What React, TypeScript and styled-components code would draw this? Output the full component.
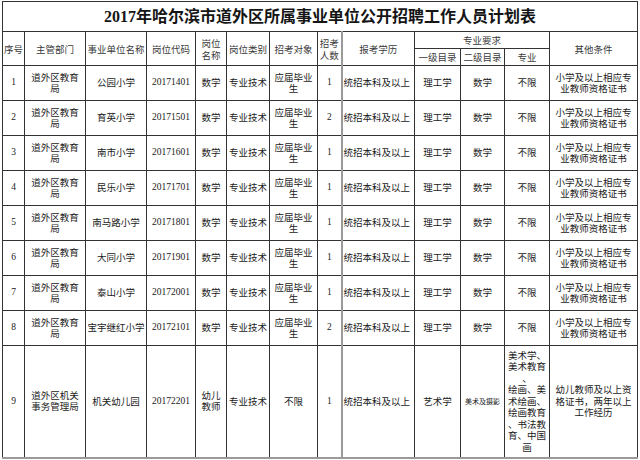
import React from 'react';
import styled, { createGlobalStyle } from 'styled-components';

const GlobalStyle = createGlobalStyle`
  html, body {
    margin: 0;
    padding: 0;
    background: #ffffff;
  }
  body {
    font-family: "Noto Sans CJK SC", "Liberation Sans", sans-serif;
    color: #111;
  }
`;

const COLS = [22, 61, 61, 49, 31, 43, 48, 24, 73, 46, 44, 45, 88];

const schools = [
    ['公园小学', '20171401', '1'],
    ['育英小学', '20171501', '2'],
    ['南市小学', '20171601', '1'],
    ['民乐小学', '20171701', '1'],
    ['南马路小学', '20171801', '1'],
    ['大同小学', '20171901', '1'],
    ['泰山小学', '20172001', '1'],
    ['宝宇继红小学', '20172101', '2'],
];

const majors = ['美术学、', '美术教育', '、', '绘画、美', '术绘画、', '绘画教育', '、书法教', '育、中国', '画'];

// text that wraps in the sheet, kept as its printed lines
const Lines = ({ items }: { items: string[] }) => (
    <>
        {items.map((t, i) => (
            <React.Fragment key={i}>
                {t}
                {i < items.length - 1 && <br />}
            </React.Fragment>
        ))}
    </>
);

const App = () => (
    <Page>
        <GlobalStyle />
        <Table>
            <colgroup>
                {COLS.map((w, i) => (
                    <col key={i} style={{ width: w }} />
                ))}
            </colgroup>
            <thead>
                <tr>
                    <Title colSpan={13}>2017年哈尔滨市道外区所属事业单位公开招聘工作人员计划表</Title>
                </tr>
                <tr>
                    <Head rowSpan={2}>序号</Head>
                    <Head rowSpan={2}>主管部门</Head>
                    <Head rowSpan={2}>事业单位名称</Head>
                    <Head rowSpan={2}>岗位代码</Head>
                    <Head rowSpan={2}>
                        <Lines items={['岗位', '名称']} />
                    </Head>
                    <Head rowSpan={2}>岗位类别</Head>
                    <Head rowSpan={2}>招考对象</Head>
                    <Head rowSpan={2}>
                        <Lines items={['招考', '人数']} />
                    </Head>
                    <Head rowSpan={2} $edge>
                        报考学历
                    </Head>
                    <Head colSpan={3} $short>
                        专业要求
                    </Head>
                    <Head rowSpan={2}>其他条件</Head>
                </tr>
                <tr>
                    <Head $short>一级目录</Head>
                    <Head $short>二级目录</Head>
                    <Head $short>专业</Head>
                </tr>
            </thead>
            <tbody>
                {schools.map(([name, code, count], i) => (
                    <Row key={code}>
                        <Cell $serif>{i + 1}</Cell>
                        <Cell>
                            <Lines items={['道外区教育', '局']} />
                        </Cell>
                        <Cell>{name}</Cell>
                        <Cell $serif>{code}</Cell>
                        <Cell>数学</Cell>
                        <Cell>专业技术</Cell>
                        <Cell>
                            <Lines items={['应届毕业', '生']} />
                        </Cell>
                        <Cell $serif>{count}</Cell>
                        <Cell $edge $left>
                            统招本科及以上
                        </Cell>
                        <Cell>理工学</Cell>
                        <Cell>数学</Cell>
                        <Cell>不限</Cell>
                        <Cell>
                            <Lines items={['小学及以上相应专', '业教师资格证书']} />
                        </Cell>
                    </Row>
                ))}
                <LastRow>
                    <Cell $serif>9</Cell>
                    <Cell>
                        <Lines items={['道外区机关', '事务管理局']} />
                    </Cell>
                    <Cell>机关幼儿园</Cell>
                    <Cell $serif>20172201</Cell>
                    <Cell>
                        <Lines items={['幼儿', '教师']} />
                    </Cell>
                    <Cell>专业技术</Cell>
                    <Cell>不限</Cell>
                    <Cell $serif>1</Cell>
                    <Cell $edge $left>
                        统招本科及以上
                    </Cell>
                    <Cell>艺术学</Cell>
                    <Cell $tiny>美术及摄影</Cell>
                    <Cell>
                        <Lines items={majors} />
                    </Cell>
                    <Cell>
                        <Lines items={['幼儿教师及以上资', '格证书，两年以上', '工作经历']} />
                    </Cell>
                </LastRow>
            </tbody>
        </Table>
    </Page>
);

const Page = styled.div`
    width: 640px;
    height: 460px;
    padding: 1px 0 0 2px;
    box-sizing: border-box;
    overflow: hidden;
`;

const Table = styled.table`
    width: 635px;
    table-layout: fixed;
    border-collapse: collapse;
    border-bottom: 2px solid #9a9a9a;
`;

const Title = styled.th`
    height: 29px;
    padding: 0;
    border: 1px solid #333;
    font-family: "Liberation Serif", "Noto Sans CJK SC", serif;
    font-size: 16px;
    font-weight: 700;
    color: #151515;
    text-align: center;
    vertical-align: middle;
    line-height: 29px;
`;

const Head = styled.th<{ $edge?: boolean; $short?: boolean }>`
    height: ${({ $short }) => ($short ? '16px' : 'auto')};
    padding: 0;
    border: 1px solid #333;
    border-left: ${({ $edge }) => ($edge ? '2px solid #9a9a9a' : '1px solid #333')};
    font-size: 9.5px;
    font-weight: 400;
    line-height: 12px;
    color: #3a3a3a;
    white-space: nowrap;
    text-align: center;
    vertical-align: middle;
`;

const Row = styled.tr`
    height: 35px;
`;

const LastRow = styled.tr`
    height: 112px;
`;

const Cell = styled.td<{
    $edge?: boolean;
    $left?: boolean;
    $serif?: boolean;
    $tiny?: boolean;
}>`
    padding: 0 1px;
    border: 1px solid #333;
    border-left: ${({ $edge }) => ($edge ? '2px solid #9a9a9a' : '1px solid #333')};
    font-family: ${({ $serif }) =>
        $serif ? '"Liberation Serif", "Noto Sans CJK SC", serif' : '"Noto Sans CJK SC", sans-serif'};
    font-size: ${({ $tiny }) => ($tiny ? '7px' : '9.5px')};
    line-height: 11.5px;
    color: #1a1a1a;
    text-align: ${({ $left }) => ($left ? 'left' : 'center')};
    white-space: nowrap;
    overflow: hidden;
    vertical-align: middle;
`;

export default App;
